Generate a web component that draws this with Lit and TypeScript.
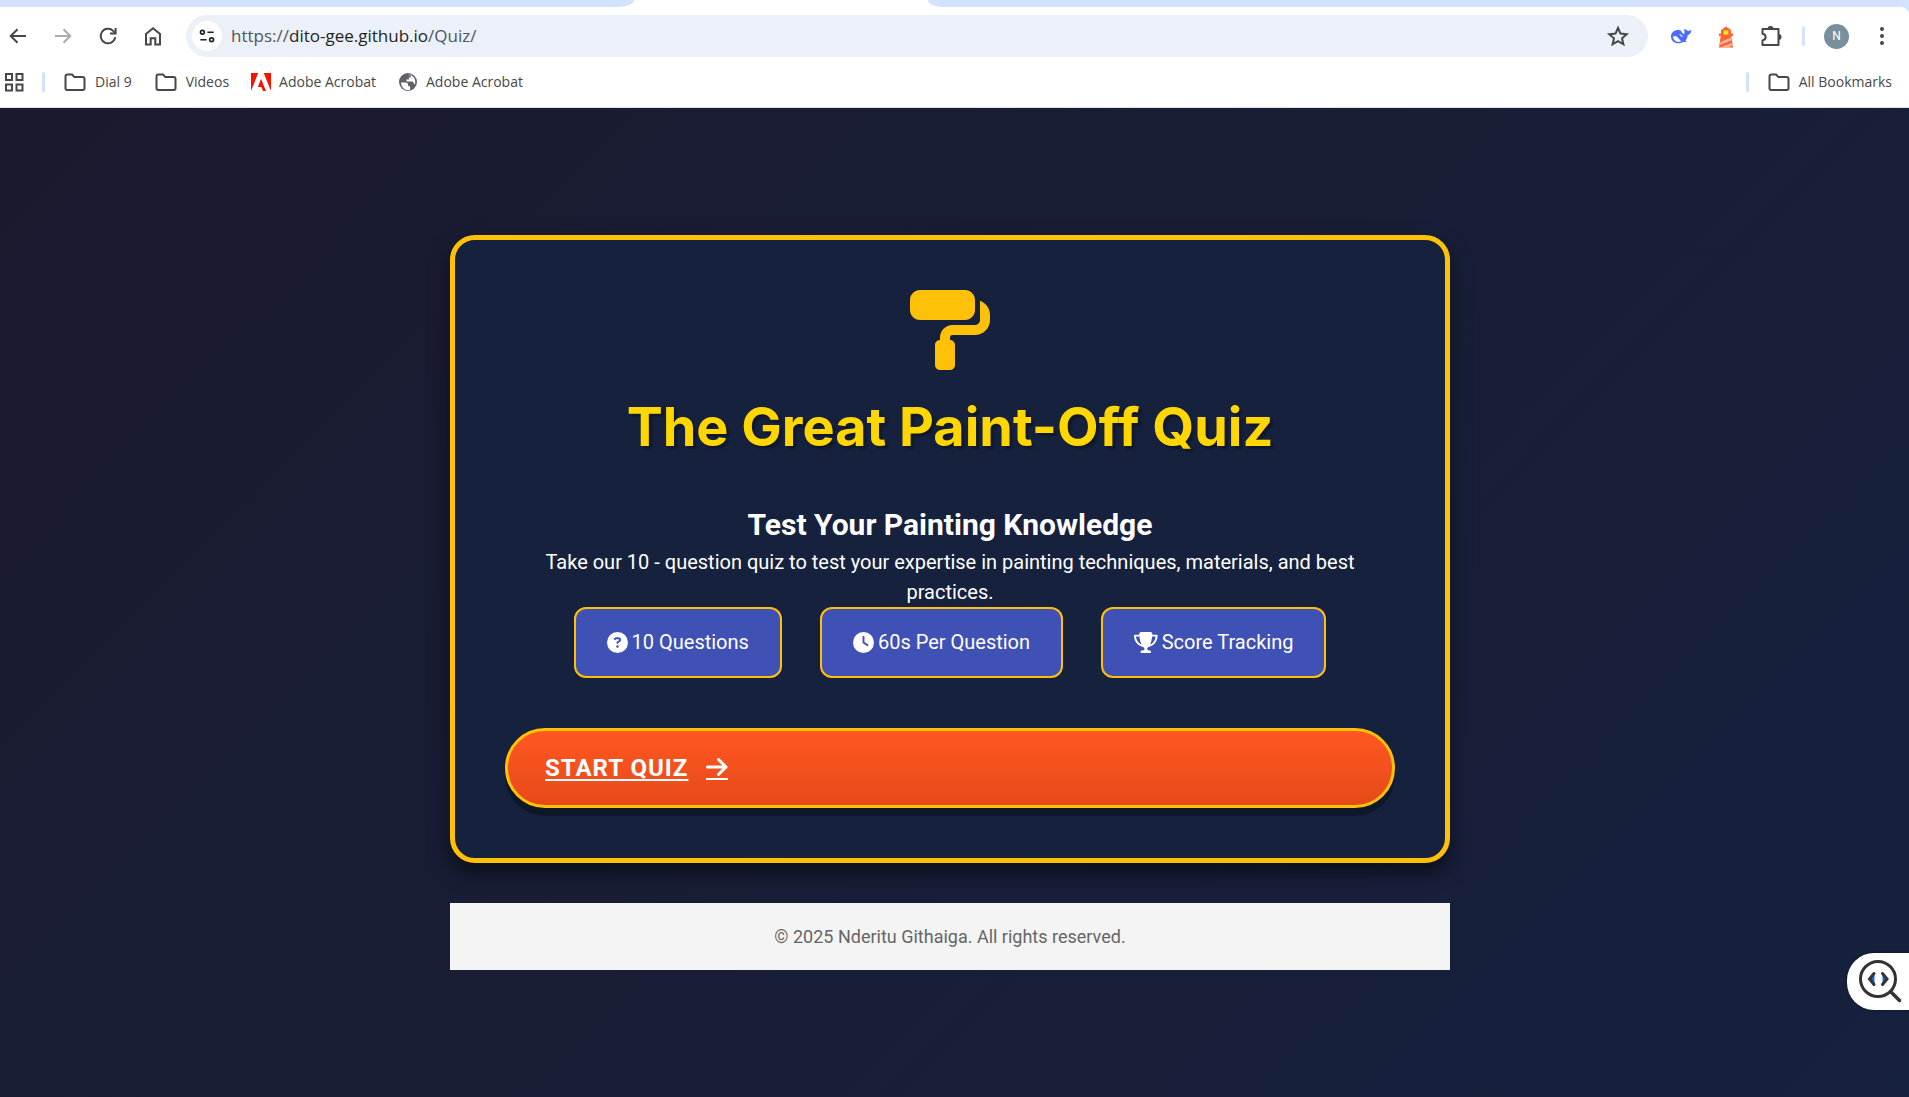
import { LitElement, html, css, svg } from "lit";
import { customElement } from "lit/decorators.js";

const ui = {
  back: svg`<path d="M20 12H5M11.500 5.200 4.700 12l6.800 6.800"/>`,
  forward: svg`<path d="M4 12h15M12.500 5.200 19.300 12l-6.800 6.800"/>`,
  reload: svg`<path d="M19.200 13.200a7.300 7.300 0 1 1-2-6.300l2 2.300"/><path d="M19.600 4v5.600H14"/>`,
  home: svg`<path d="M5 20.500V10l7-5.800 7 5.800v10.500h-4.700v-6.200H9.700v6.200z"/>`,
  apps: svg`<path d="M4 4h6v6H4zM14.500 4h6v6h-6zM4 14.500h6v6H4zM14.500 14.500h6v6h-6z"/>`,
  folder: svg`<path d="M2.500 6.500q0-2 2-2h4.600l2.300 2.600h8.100q2 0 2 2v9.100q0 1.700-1.800 1.700H4.300q-1.800 0-1.800-1.700z"/>`,
  star: svg`<path d="m12 4 2.500 5.600 6.200.6-4.700 4.100 1.400 6-5.400-3.200-5.400 3.200 1.400-6-4.700-4.100 6.200-.6z"/>`,
  tune: svg`<circle cx="6.500" cy="7.500" r="2.300"/><path d="M12.500 7.500h7.500M4 16.500h7.500"/><circle cx="17.500" cy="16.500" r="2.300"/>`,
  puzzle: svg`<path d="M3.500 5h16v16h-16v-4.600c4.200-.6 4.200-6 0-6.600z" stroke-linejoin="round"/><path d="M8.500 5a3 3 0 0 1 6 0zM19.500 10a3 3 0 0 1 0 6z" fill="currentColor" stroke="none"/>`,
};

const icon = (name: keyof typeof ui) =>
  html`<svg class="line" viewBox="0 0 24 24" aria-hidden="true">${ui[name]}</svg>`;

@customElement("browser-bar")
export class BrowserBar extends LitElement {
  static styles = css`
    :host { display: block; background: #d3e3fd; color: #474747; font: 14px/20px "Open Sans", sans-serif; border-bottom: 1px solid #dfe2e6; }
    .tabs { display: flex; height: 7px; background: #fff; }
    .tab { background: #d3e3fd; }
    .tab.left { flex: 634; border-bottom-right-radius: 16px 7px; }
    .tab.right { flex: 981; border-bottom-left-radius: 14px 7px; }
    .tab.current { flex: 294; background: #fff; }
    .row { display: flex; align-items: center; background: #fff; }
    .toolbar { height: 42px; padding: 8px 15px 0 6px; gap: 21px; border-top-right-radius: 8px; }
    .marks { height: 50px; padding: 0 17px 0 2px; }
    button { display: inline-flex; align-items: center; justify-content: center; border: 0; padding: 0; background: none; color: inherit; font: inherit; }
    .line { display: block; width: 24px; height: 24px; fill: none; stroke: currentColor; stroke-width: 2; }
    .faded { color: #acacac; }
    .address { display: flex; align-items: center; flex: 1; height: 42px; border-radius: 21px; background: #ebf0f9; padding: 0 18px 0 6px; }
    .site { width: 30px; height: 30px; border-radius: 50%; background: #fff; color: #202124; }
    .site .line { width: 20px; height: 20px; }
    .url { flex: 1; padding: 0 0 0 9px; font-size: 17px; line-height: 24px; color: #50565d; white-space: nowrap; text-decoration: none; }
    .host { color: #1f1f1f; }
    .ext svg { display: block; width: 24px; height: 24px; }
    .rule { width: 3px; height: 20px; border-radius: 2px; background: #d3e3fd; }
    .toolbar .rule { margin: 0 -2px; }
    .avatar { width: 25px; height: 25px; border-radius: 50%; background: #78909c; color: #fff; font: 12px/25px Roboto, sans-serif; }
    .dots { width: 24px; }
    .dots svg { width: 6px; height: 20px; }
    a.mark { display: flex; align-items: center; gap: 8px; color: inherit; text-decoration: none; white-space: nowrap; }
    .mark .logo { width: 20px; height: 20px; display: block; }
    .links { display: flex; align-items: center; gap: 22px; margin-left: 18px; flex: 1; }
    .end { display: flex; align-items: center; gap: 18px; }
    .grid { margin-right: 16px; }
  `;

  render() {
    return html`
      <div class="tabs"><div class="tab left"></div><div class="tab current"></div><div class="tab right"></div></div>
      <div class="row toolbar">
        <button aria-label="Back">${icon("back")}</button>
        <button class="faded" aria-label="Forward">${icon("forward")}</button>
        <button aria-label="Reload">${icon("reload")}</button>
        <button aria-label="Home">${icon("home")}</button>
        <div class="address">
          <button class="site" aria-label="Site information">${icon("tune")}</button>
          <a class="url" href="https://dito-gee.github.io/Quiz/">https://<span class="host">dito-gee.github.io</span>/Quiz/</a>
          <button aria-label="Bookmark this page">${icon("star")}</button>
        </div>
        <button class="ext" aria-label="Whale extension">
          <svg viewBox="0 0 24 24"><path fill="#4d6bfe" d="M2 12.500c0-4 3.300-6.500 7.400-6.400 1.300 0 2 .4 2.800.9.300 1.400 1.400 2.500 2.700 3.200.6-.8.800-1.700.7-2.700-.5-.6-.7-1.500-.5-2.400.8.500 1.700.8 2.600 1 .7.600 1.100 1 1.600 1.200.8-.8 1.800-1 3-1-.2 2.600-1.400 4.500-3.600 4.900-.2 2.200-1 4-2.300 5.400l1.300 1.100c-1 .6-2.200.6-3.200 0C9 21 2 18.900 2 12.500z"/><path fill="#fff" d="M4 12.700c1.500-1 3.300-.7 4.700.7l3.600 4c-3.500 1-6.200 0-7.500-2.200-.4-.7-.7-1.600-.8-2.500zM10.300 10.300c1.300-.2 3 .9 3.400 2.400-.9.400-1.500 0-2-.6s-.8-1.200-1.400-1.800z"/></svg>
        </button>
        <button class="ext" aria-label="Lighthouse extension">
          <svg viewBox="0 0 24 24"><path fill="#ff6433" d="M12 2.500 17 6v3.500h2V12h-1.700L19 23.500H5L6.700 12H5V9.500h2V6z"/><path fill="#ffeb1f" d="M9.700 6.500h4.600v4H9.700z"/><path fill="#ffb39b" d="m6.500 18 10.800-4.500.4 2.700L6 21zM5.700 23.500 18.200 19l.4 2.300-4.800 2.200z"/></svg>
        </button>
        <button aria-label="Extensions">${icon("puzzle")}</button>
        <span class="rule"></span>
        <button class="avatar" aria-label="Profile N">N</button>
        <button class="dots" aria-label="Menu"><svg viewBox="0 0 6 20"><g fill="#474747"><circle cx="3" cy="3" r="2"/><circle cx="3" cy="10" r="2"/><circle cx="3" cy="17" r="2"/></g></svg></button>
      </div>
      <div class="row marks">
        <button class="grid" aria-label="Apps">${icon("apps")}</button>
        <span class="rule"></span>
        <nav class="links" aria-label="Bookmarks">
          <a class="mark" href="#dial">${icon("folder")}Dial 9</a>
          <a class="mark" href="#videos">${icon("folder")}Videos</a>
          <a class="mark" href="#acrobat"><svg class="logo" viewBox="0 0 20 18"><path fill="#fa1200" d="M0 0h7.200L0 18zM12.700 0H20v18zM10 5.800 15 18h-3l-1.600-4H6.900z"/></svg>Adobe Acrobat</a>
          <a class="mark" href="#acrobat-web"><svg class="logo" viewBox="0 0 20 20"><circle cx="10" cy="10" r="9" fill="#5f6368"/><path fill="#fff" d="M3 10.500h4.500c2 0 2.600 1 2.600 2.600v1.200h2V18c-5 1-9-2.600-9.100-7.500zM9.800 3l3.700-.5c0 2-.6 2.800-2.600 2.900v2.200H8.500v1.900h5.800c1.500 0 1.500 2.600 2.600 3.300C18 9 16.700 5 13.500 3.500L9.800 3z"/></svg>Adobe Acrobat</a>
        </nav>
        <div class="end"><span class="rule"></span><a class="mark" href="#all">${icon("folder")}All Bookmarks</a></div>
      </div>
    `;
  }
}

@customElement("quiz-page")
export class QuizPage extends LitElement {
  static styles = css`
    :host { display: flex; flex-direction: column; background: linear-gradient(135deg, #1a1a2e, #16213e); color: #fff; font: 20px/30px Roboto, sans-serif; }
    main { flex: 1; display: flex; flex-direction: column; align-items: center; justify-content: center; gap: 40px; padding: 0 9px 0 0; }
    .card, footer { box-sizing: border-box; width: 1000px; max-width: 100%; }
    .card { display: flex; flex-direction: column; padding: 50px; border: 5px solid #ffc107; border-radius: 25px; background: #16213e; text-align: center; box-shadow: 0 10px 20px rgba(0, 0, 0, 0.5); }
    .roller { width: 80px; height: 80px; margin: 0 auto 25px; fill: #ffc107; }
    h1 { margin: 0 0 43px; font: 700 54px/64px Inter, sans-serif; color: #ffd700; text-shadow: 3px 3px 2px rgba(0, 0, 0, 0.3); }
    h2 { margin: 0; font-size: 30px; line-height: 45px; font-weight: 700; }
    p { margin: 0 30px; }
    .facts { display: flex; flex-wrap: wrap; justify-content: center; gap: 38px; list-style: none; margin: 0; padding: 0; }
    .facts li { display: flex; align-items: center; gap: 4px; padding: 18px 31px; border: 2px solid #ffc107; border-radius: 12px; background: #3f51b5; line-height: 31px; }
    .facts svg { height: 21px; width: auto; fill: #fff; }
    .start { display: flex; align-items: center; gap: 18px; margin-top: 50px; padding: 19px 37px; border: 3px solid #ffc107; border-radius: 40px; background: linear-gradient(#ff5722, #e64a19); color: #fff; font-size: 24px; line-height: 36px; font-weight: 700; letter-spacing: 1px; text-decoration: underline; text-decoration-thickness: 2px; text-underline-offset: 3px; box-shadow: 0 8px 0 rgba(0, 0, 0, 0.3); }
    .start svg { width: 22px; height: 24px; fill: none; stroke: #fff; stroke-linecap: round; stroke-linejoin: round; stroke-width: 3; }
    footer { padding: 20px; background: #f4f4f4; color: #666; font-size: 18px; line-height: 27px; text-align: center; }
  `;

  render() {
    return html`
      <main>
        <section class="card">
          <svg class="roller" viewBox="0 0 512 512" aria-hidden="true"><path d="M0 64C0 28.700 28.700 0 64 0H352c35.300 0 64 28.700 64 64v64c0 35.300-28.700 64-64 64H64c-35.300 0-64-28.700-64-64V64zM160 352c0-17.700 14.300-32 32-32V304c0-44.200 35.800-80 80-80H416c17.700 0 32-14.300 32-32V69.500c37.300 13.200 64 48.700 64 90.500v32c0 53-43 96-96 96H272c-8.800 0-16 7.200-16 16v16c17.700 0 32 14.300 32 32V480c0 17.700-14.300 32-32 32H192c-17.700 0-32-14.300-32-32V352z"/></svg>
          <h1>The Great Paint-Off Quiz</h1>
          <h2>Test Your Painting Knowledge</h2>
          <p>Take our 10 - question quiz to test your expertise in painting techniques, materials, and best practices.</p>
          <ul class="facts">
            <li><svg viewBox="0 0 512 512" aria-hidden="true"><path d="M256 512A256 256 0 1 0 256 0a256 256 0 1 0 0 512zM169.800 165.300c7.900-22.300 29.100-37.300 52.800-37.300h58.300c34.900 0 63.100 28.300 63.100 63.100c0 22.600-12.100 43.500-31.700 54.800L280 264.400c-.2 13-10.900 23.600-24 23.600c-13.300 0-24-10.700-24-24V250.500c0-8.600 4.600-16.500 12.100-20.800l44.300-25.400c4.700-2.700 7.600-7.700 7.600-13.100c0-8.400-6.800-15.100-15.100-15.100H222.600c-3.400 0-6.400 2.100-7.500 5.300l-.4 1.200c-4.400 12.500-18.200 19-30.600 14.600s-19-18.200-14.600-30.600l.4-1.200zM224 352a32 32 0 1 1 64 0 32 32 0 1 1-64 0z"/></svg>10 Questions</li>
            <li><svg viewBox="0 0 512 512" aria-hidden="true"><path d="M256 0a256 256 0 1 1 0 512A256 256 0 1 1 256 0zM232 120V256c0 8 4 15.500 10.700 20l96 64c11 7.400 25.900 4.400 33.300-6.700s4.400-25.900-6.700-33.300L280 243.200V120c0-13.300-10.700-24-24-24s-24 10.700-24 24z"/></svg>60s Per Question</li>
            <li><svg viewBox="0 0 576 512" aria-hidden="true"><path d="M400 0H176c-26.500 0-48.100 21.800-47.100 48.200c.2 5.300 .4 10.600 .7 15.800H24C10.700 64 0 74.700 0 88c0 92.600 33.500 157 78.500 200.700c44.300 43.100 98.300 64.800 138.100 75.800c23.400 6.500 39.400 26 39.400 45.600c0 20.900-17 37.900-37.900 37.900H192c-17.700 0-32 14.300-32 32s14.300 32 32 32H384c17.700 0 32-14.300 32-32s-14.300-32-32-32H357.900C337 448 320 431 320 410.100c0-19.600 15.900-39.200 39.400-45.600c39.900-11 93.900-32.700 138.200-75.800C542.500 245 576 180.600 576 88c0-13.300-10.700-24-24-24H446.400c.3-5.200 .5-10.400 .7-15.800C448.100 21.800 426.500 0 400 0zM48.900 112h84.400c9.100 90.100 29.200 150.300 51.900 190.600c-24.900-11-50.800-26.500-73.200-48.300c-32-31.100-58-76-63-142.300zM464.100 254.300c-22.400 21.800-48.300 37.300-73.200 48.300c22.700-40.300 42.800-100.500 51.900-190.600h84.400c-5.100 66.300-31.100 111.200-63 142.300z"/></svg>Score Tracking</li>
          </ul>
          <a class="start" href="#quiz"><span>START QUIZ</span><svg viewBox="0 0 22 24" aria-hidden="true"><path d="M1.500 11h18.500M12.500 3.500 20 11l-7.500 7.500"/><path d="M0 23h22" stroke-width="2" stroke-linecap="butt"/></svg></a>
        </section>
        <footer>© 2025 Nderitu Githaiga. All rights reserved.</footer>
      </main>
    `;
  }
}

@customElement("app-root")
export class AppRoot extends LitElement {
  static styles = css`
    :host { display: flex; flex-direction: column; min-height: 100vh; overflow: hidden; position: relative; }
    quiz-page { flex: 1; }
    .inspect { position: absolute; right: 0; bottom: 87px; width: 62px; height: 57px; padding: 0; border: 0; border-radius: 27px 0 0 27px; background: #fff; box-shadow: 0 0 3px rgba(0, 0, 0, 0.5); }
    .inspect svg { display: block; width: 62px; height: 57px; }
  `;

  render() {
    return html`
      <browser-bar></browser-bar>
      <quiz-page></quiz-page>
      <button class="inspect" aria-label="Inspect code">
        <svg viewBox="0 0 62 57" fill="none" stroke="#333" stroke-linecap="round"><circle cx="31" cy="26" r="17.500" stroke-width="3"/><path d="m43.500 38.500 9 9" stroke-width="3.500"/><path d="M27.500 21 23.500 26l4 5z" fill="#0b6cff" stroke="none"/><path d="m35.500 21 4 5-4 5z" fill="#0b6cff" stroke="none"/><path d="m27 20.500-4.500 5.500 4.500 5.500M35.500 20.500l4.500 5.500-4.500 5.500" stroke-width="3"/></svg>
      </button>
    `;
  }
}
